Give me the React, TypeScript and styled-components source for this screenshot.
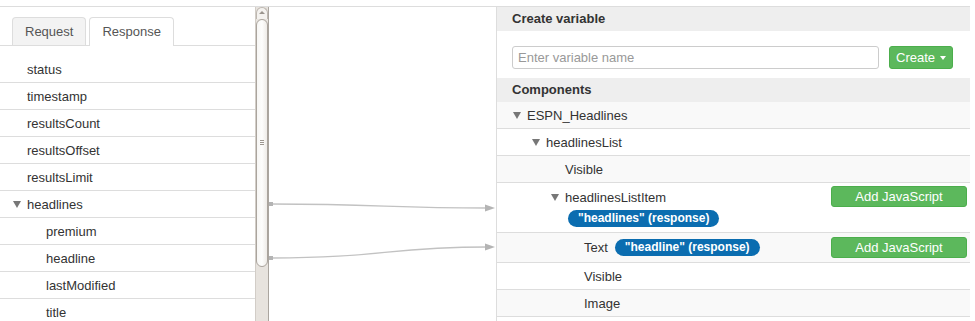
import styled, { createGlobalStyle } from "styled-components";

const GlobalStyle = createGlobalStyle`
    body {
        margin: 0;
        background: #fff;
        font-family: "Liberation Sans", Arial, sans-serif;
        font-size: 13px;
        color: #333;
    }
`;

const Page = styled.div`
    padding-top: 6px;
    width: 975px;
    height: 321px;
    box-sizing: border-box;
    overflow: hidden;
`;

const Frame = styled.div`
    display: flex;
    border-top: 1px solid #ddd;
    height: 314px;
    width: 970px;
`;

/* ---------- left side ---------- */

const LeftPanel = styled.div`
    width: 255px;
    flex: none;
    overflow: hidden;
`;

const TabBar = styled.div`
    display: flex;
    gap: 3px;
    padding: 10px 0 0 12px;
    border-bottom: 1px solid #ddd;
`;

const Tab = styled.div<{ active?: boolean }>`
    line-height: 28px;
    padding: 0 12px;
    border: 1px solid #ddd;
    border-bottom: none;
    border-radius: 4px 4px 0 0;
    margin-bottom: ${({ active }) => (active ? "-1px" : "0")};
    height: ${({ active }) => (active ? "28px" : "27px")};
    background: ${({ active }) => (active ? "#fff" : "#f3f3f3")};
    color: #555;
`;

const FieldList = styled.div`
    padding-top: 10px;
`;

const FieldRow = styled.div<{ indent?: number }>`
    display: flex;
    align-items: center;
    height: 26px;
    border-bottom: 1px solid #ddd;
    padding-left: ${({ indent }) => indent ?? 27}px;
`;

const Caret = styled.span<{ gap?: number }>`
    display: inline-block;
    width: 0;
    height: 0;
    border-left: 4px solid transparent;
    border-right: 4px solid transparent;
    border-top: 7px solid #777;
    margin-right: ${({ gap }) => gap ?? 6}px;
`;

const ScrollBar = styled.div`
    width: 12px;
    flex: none;
    display: flex;
    flex-direction: column;
    background: #e7e3de;
    border-left: 1px solid #d2cdc7;
    border-right: 1px solid #aaa59f;
    box-sizing: content-box;
`;

const ScrollUp = styled.div`
    height: 12px;
    border: 1px solid #bdb7b0;
    border-bottom: none;
    border-radius: 6px 6px 0 0;
    background: #f4f2ef;
    display: flex;
    justify-content: center;
    padding-top: 3px;
    box-sizing: border-box;
    &::after {
        content: "";
        width: 0;
        height: 0;
        border-left: 3px solid transparent;
        border-right: 3px solid transparent;
        border-bottom: 3px solid #9a948d;
    }
`;

const Thumb = styled.div`
    height: 248px;
    border: 1px solid #aaa49d;
    border-radius: 6px;
    background: linear-gradient(to right, #f7f6f4, #fdfdfc 50%, #eeebe7);
    display: flex;
    align-items: center;
    justify-content: center;
    box-sizing: border-box;
`;

const Grip = styled.div`
    width: 4px;
    height: 6px;
    background: repeating-linear-gradient(
        to bottom,
        #9c968f 0,
        #9c968f 1px,
        transparent 1px,
        transparent 2px
    );
`;

const Canvas = styled.div`
    position: relative;
    width: 227px;
    flex: none;
`;

const Wires = styled.svg`
    position: absolute;
    left: 0;
    top: 0;
`;

/* ---------- right side ---------- */

const RightPanel = styled.div`
    width: 473px;
    flex: none;
    border-left: 1px solid #ddd;
`;

const SectionHead = styled.div`
    height: 24px;
    line-height: 24px;
    background: #eee;
    font-weight: bold;
    padding-left: 15px;
`;

const CreateRow = styled.div`
    display: flex;
    align-items: flex-start;
    gap: 10px;
    height: 47px;
    padding: 15px 0 0 15px;
    box-sizing: border-box;
`;

const NameInput = styled.input`
    width: 367px;
    height: 23px;
    box-sizing: border-box;
    border: 1px solid #ccc;
    border-radius: 3px;
    padding: 0 5px;
    font-family: inherit;
    font-size: 13px;
    color: #555;
    &::placeholder {
        color: #999;
    }
`;

const GreenButton = styled.button<{ wide?: boolean; top?: number }>`
    height: ${({ wide }) => (wide ? 21 : 23)}px;
    width: ${({ wide }) => (wide ? "136px" : "auto")};
    padding: 0 6px;
    margin-top: ${({ top }) => top ?? 0}px;
    align-self: ${({ top }) => (top !== undefined ? "flex-start" : "center")};
    background: #5cb85c;
    border: 1px solid #4cae4c;
    border-radius: 3px;
    color: #fff;
    font-family: inherit;
    font-size: 13px;
    line-height: 1;
    display: inline-flex;
    align-items: center;
    justify-content: center;
    gap: 5px;
    flex: none;
`;

const DownCaret = styled.span`
    width: 0;
    height: 0;
    border-left: 3px solid transparent;
    border-right: 3px solid transparent;
    border-top: 4px solid #fff;
`;

const TreeRow = styled.div<{ striped?: boolean; h?: number }>`
    display: flex;
    align-items: center;
    justify-content: space-between;
    height: ${({ h }) => h ?? 26}px;
    border-bottom: 1px solid #ddd;
    background: ${({ striped }) => (striped ? "#f9f9f9" : "#fff")};
    padding-right: 3px;
`;

const TreeLabel = styled.div<{ level: number; leaf?: boolean }>`
    display: flex;
    align-items: center;
    padding-left: ${({ level, leaf }) => 16 + level * 19 + (leaf ? 14 : 0)}px;
`;

const Stack = styled.div`
    display: flex;
    flex-direction: column;
    gap: 5px;
    padding-top: 1px;
`;

const Binding = styled.span<{ shift?: number }>`
    display: inline-block;
    height: 17px;
    line-height: 17px;
    padding: 0 10px;
    border-radius: 9px;
    background: #0b6db0;
    color: #fff;
    font-size: 12px;
    font-weight: bold;
    margin-left: ${({ shift }) => shift ?? 0}px;
    white-space: nowrap;
`;

const fields: { name: string; indent?: number; open?: boolean }[] = [
    { name: "status" },
    { name: "timestamp" },
    { name: "resultsCount" },
    { name: "resultsOffset" },
    { name: "resultsLimit" },
    { name: "headlines", open: true },
    { name: "premium", indent: 46 },
    { name: "headline", indent: 46 },
    { name: "lastModified", indent: 46 },
    { name: "title", indent: 46 },
];

const Connectors = () => (
    <Wires width="227" height="314" viewBox="0 0 227 314">
        <g fill="none" stroke="#c2c2c2" strokeWidth="1.3">
            <path d="M3 197 C 110 197, 120 201, 218 201" />
            <path d="M3 251 C 110 251, 120 240, 218 240" />
        </g>
        <g fill="#b4b4b4">
            <rect x="0" y="195" width="4" height="4" />
            <rect x="0" y="249" width="4" height="4" />
            <path d="M216 197.5 L226 201 L216 204.5 Z" />
            <path d="M216 236.5 L226 240 L216 243.5 Z" />
        </g>
    </Wires>
);

const App = () => {
    return (
        <Page>
            <GlobalStyle />
            <Frame>
                <LeftPanel>
                    <TabBar>
                        <Tab>Request</Tab>
                        <Tab active>Response</Tab>
                    </TabBar>
                    <FieldList>
                        {fields.map((f) => (
                            <FieldRow key={f.name} indent={f.open ? 13 : f.indent}>
                                {f.open && <Caret />}
                                {f.name}
                            </FieldRow>
                        ))}
                    </FieldList>
                </LeftPanel>

                <ScrollBar>
                    <ScrollUp />
                    <Thumb>
                        <Grip />
                    </Thumb>
                </ScrollBar>

                <Canvas>
                    <Connectors />
                </Canvas>

                <RightPanel>
                    <SectionHead>Create variable</SectionHead>
                    <CreateRow>
                        <NameInput placeholder="Enter variable name" />
                        <GreenButton top={0}>
                            Create <DownCaret />
                        </GreenButton>
                    </CreateRow>
                    <SectionHead>Components</SectionHead>

                    <TreeRow striped>
                        <TreeLabel level={0}>
                            <Caret />
                            ESPN_Headlines
                        </TreeLabel>
                    </TreeRow>
                    <TreeRow>
                        <TreeLabel level={1}>
                            <Caret />
                            headlinesList
                        </TreeLabel>
                    </TreeRow>
                    <TreeRow striped>
                        <TreeLabel level={2} leaf>
                            Visible
                        </TreeLabel>
                    </TreeRow>
                    <TreeRow h={49}>
                        <Stack>
                            <TreeLabel level={2}>
                                <Caret />
                                headlinesListItem
                            </TreeLabel>
                            <TreeLabel level={2} leaf>
                                <Binding shift={3}>"headlines" (response)</Binding>
                            </TreeLabel>
                        </Stack>
                        <GreenButton wide top={3}>
                            Add JavaScript
                        </GreenButton>
                    </TreeRow>
                    <TreeRow striped h={29}>
                        <TreeLabel level={3} leaf>
                            Text
                            <Binding shift={7}>"headline" (response)</Binding>
                        </TreeLabel>
                        <GreenButton wide>Add JavaScript</GreenButton>
                    </TreeRow>
                    <TreeRow>
                        <TreeLabel level={3} leaf>
                            Visible
                        </TreeLabel>
                    </TreeRow>
                    <TreeRow striped>
                        <TreeLabel level={3} leaf>
                            Image
                        </TreeLabel>
                    </TreeRow>
                </RightPanel>
            </Frame>
        </Page>
    );
};

export default App;
